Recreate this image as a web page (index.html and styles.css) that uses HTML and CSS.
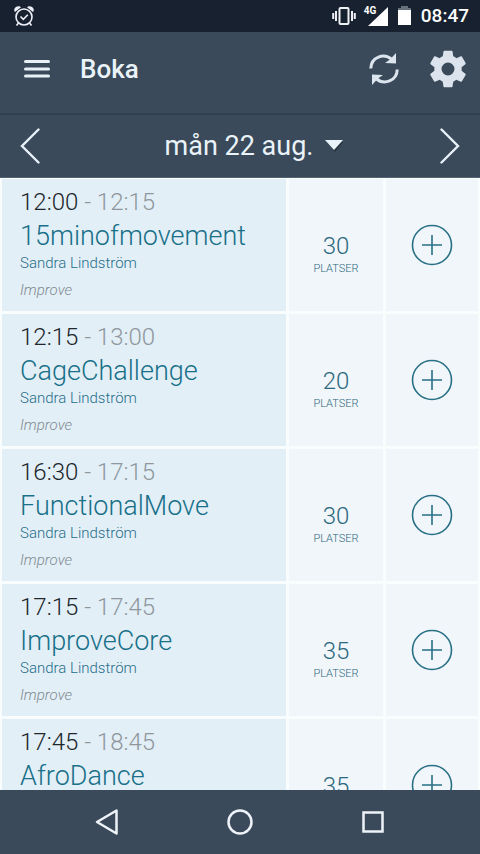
FILE: index.html
```html
<!DOCTYPE html>
<html lang="sv">
<head>
<meta charset="utf-8">
<meta name="viewport" content="width=device-width, initial-scale=1">
<title>Boka</title>
<link rel="stylesheet" href="styles.css">
</head>
<body>
<svg class="sprite" aria-hidden="true">
  <symbol id="plus" viewBox="0 0 42 42"><circle cx="21" cy="21" r="19.5"/><path d="M21 11v20M11 21h20"/></symbol>
</svg>
<div class="app">
  <div class="status">
    <svg class="alarm" width="22" height="22" viewBox="0 0 22 22" fill="none" stroke="#eef0f8" stroke-width="1.6"><circle cx="11" cy="12" r="8"/><path d="M7.500 11.500l2.800 2.800 4.500-4.600M5.500 18l-2 2.500M16.500 18l2 2.500"/><path d="M1.200 5.800Q1 1 6.500 1.200L8 2.200 2 7zM20.800 5.800Q21 1 15.500 1.200L14 2.200 20 7z" fill="#eef0f8" stroke="none"/></svg>
    <div class="status-right">
      <svg width="24" height="20" viewBox="0 0 24 20" fill="none" stroke="#eef0f4" stroke-width="2"><rect x="7.500" y="2" width="9" height="16" rx="1"/><path d="M4 5v10M20 5v10M1.200 7v6M22.800 7v6"/></svg>
      <span class="network"><span class="network-label">4G</span><svg width="20" height="19" viewBox="0 0 20 20" preserveAspectRatio="none"><path d="M20 0v20H0z" fill="#fff"/></svg></span>
      <svg width="13" height="20" viewBox="0 0 13 20"><path d="M3 0h7v2h3v3H0V2h3z" fill="#67717b"/><path d="M0 4h13v15H0z" fill="#fff"/></svg>
      <span class="clock">08:47</span>
    </div>
  </div>
  <header class="bar">
    <button class="icon-btn" aria-label="Meny"><svg width="26" height="20" viewBox="0 0 26 20" stroke="#e8f1f8" stroke-width="3" stroke-linecap="round"><path d="M1.500 2.500h23M1.500 10h23M1.500 17h23"/></svg></button>
    <h1>Boka</h1>
    <button class="icon-btn" aria-label="Uppdatera"><svg width="32" height="34" viewBox="0 0 32 34" fill="none" stroke="#dce5ee" stroke-width="3"><path d="M2.800 16.500C3 5 16 .5 24 7.500"/><path d="M29.200 17.500C29 29 16 33.500 8 26.500"/><path d="M28 1v10.500l-11-.5 5-3.500zM4 33V22.500l11 .5-5 3.500z" fill="#dce5ee" stroke="none"/></svg></button>
    <button class="icon-btn" aria-label="Inställningar"><svg width="38" height="38" viewBox="2 2 20 20"><path fill="#dce3ec" d="M19.140 12.940c.04-.3.060-.61.060-.94 0-.32-.020-.64-.070-.94l2.030-1.580c.18-.14.230-.41.120-.61l-1.920-3.320c-.12-.22-.37-.29-.59-.22l-2.390.96c-.5-.38-1.030-.7-1.620-.94l-.36-2.540c-.04-.24-.24-.41-.48-.41h-3.840c-.24 0-.43.170-.47.410l-.36 2.540c-.59.240-1.130.57-1.620.94l-2.390-.96c-.22-.08-.47 0-.59.220L2.740 8.870c-.12.210-.08.470.120.610l2.030 1.580c-.05.300-.09.630-.09.940s.020.640.070.940l-2.030 1.580c-.18.140-.23.410-.12.610l1.920 3.320c.12.220.370.290.590.220l2.390-.96c.5.380 1.030.7 1.620.94l.36 2.540c.05.240.240.410.480.410h3.840c.24 0 .44-.17.470-.41l.36-2.540c.59-.24 1.130-.56 1.620-.94l2.390.96c.22.080.47 0 .59-.22l1.920-3.320c.12-.22.070-.47-.12-.61l-2.010-1.580zM12 15.400a3.400 3.400 0 1 1 0-6.800 3.400 3.400 0 0 1 0 6.800z"/></svg></button>
  </header>
  <nav class="date-bar" aria-label="Datum">
    <button class="icon-btn" aria-label="Föregående dag"><svg width="20" height="36" viewBox="0 0 20 36" fill="none" stroke="#e8f1f8" stroke-width="2.400" stroke-linecap="round"><path d="M18.500 1.500L2 18l16.500 16.500"/></svg></button>
    <button class="date">mån 22 aug.<svg width="18" height="12" viewBox="0 0 18 12"><path d="M2 2h16l-8 10z" fill="#27343f"/><path d="M0 0h18L9 10z" fill="#e8f4fa"/></svg></button>
    <button class="icon-btn" aria-label="Nästa dag"><svg width="20" height="36" viewBox="0 0 20 36" fill="none" stroke="#e8f1f8" stroke-width="2.400" stroke-linecap="round"><path d="M1.500 1.500L18 18 1.500 34.500"/></svg></button>
  </nav>
  <main class="list">
    <article class="row">
      <div class="info"><p class="time">12:00 <span>- 12:15</span></p><h2>15minofmovement</h2><p class="coach">Sandra Lindström</p><p class="place">Improve</p></div>
      <div class="spots"><b>30</b><small>PLATSER</small></div>
      <button class="add" aria-label="Boka 15minofmovement"><svg><use href="#plus"/></svg></button>
    </article>
    <article class="row">
      <div class="info"><p class="time">12:15 <span>- 13:00</span></p><h2>CageChallenge</h2><p class="coach">Sandra Lindström</p><p class="place">Improve</p></div>
      <div class="spots"><b>20</b><small>PLATSER</small></div>
      <button class="add" aria-label="Boka CageChallenge"><svg><use href="#plus"/></svg></button>
    </article>
    <article class="row">
      <div class="info"><p class="time">16:30 <span>- 17:15</span></p><h2>FunctionalMove</h2><p class="coach">Sandra Lindström</p><p class="place">Improve</p></div>
      <div class="spots"><b>30</b><small>PLATSER</small></div>
      <button class="add" aria-label="Boka FunctionalMove"><svg><use href="#plus"/></svg></button>
    </article>
    <article class="row">
      <div class="info"><p class="time">17:15 <span>- 17:45</span></p><h2>ImproveCore</h2><p class="coach">Sandra Lindström</p><p class="place">Improve</p></div>
      <div class="spots"><b>35</b><small>PLATSER</small></div>
      <button class="add" aria-label="Boka ImproveCore"><svg><use href="#plus"/></svg></button>
    </article>
    <article class="row">
      <div class="info"><p class="time">17:45 <span>- 18:45</span></p><h2>AfroDance</h2></div>
      <div class="spots"><b>35</b></div>
      <button class="add" aria-label="Boka AfroDance"><svg><use href="#plus"/></svg></button>
    </article>
  </main>
  <nav class="system" aria-label="System">
    <button class="icon-btn" aria-label="Tillbaka"><svg width="26" height="28" viewBox="0 0 26 28"><path d="M22.500 2.500v23L3 14z" stroke-linejoin="round"/></svg></button>
    <button class="icon-btn" aria-label="Hem"><svg width="26" height="28" viewBox="0 0 26 28"><circle cx="13" cy="14" r="11.500"/></svg></button>
    <button class="icon-btn" aria-label="Översikt"><svg width="26" height="28" viewBox="0 0 26 28"><rect x="3.500" y="4.500" width="19" height="19"/></svg></button>
  </nav>
</div>
</body>
</html>
```
FILE: styles.css
```css
* { box-sizing: border-box; margin: 0; padding: 0; }
body { font-family: Roboto, "Noto Sans", sans-serif; background: #3a4a5a; }
button { border: 0; background: none; color: inherit; font: inherit; cursor: pointer; }
svg { display: block; flex: none; }
.sprite { display: none; }
.app { display: flex; flex-direction: column; height: 100vh; }

.status {
  display: flex; align-items: center; justify-content: space-between;
  flex: none; height: 32px; padding: 0 11px 0 13px;
  background: #182130; color: #fff;
}
.status-right { display: flex; align-items: center; gap: 10px; }
.network { position: relative; display: block; margin-left: 2px; }
.network-label {
  position: absolute; left: -4px; top: -2px;
  font-size: 10px; line-height: 12px; font-weight: 700;
}
.clock { font-size: 19px; line-height: 24px; font-weight: 500; }

.bar {
  display: flex; align-items: center; gap: 29px;
  flex: none; height: 83px; padding: 0 13px 8px 24px;
  background: #3a4a5a; color: #eaf3f9;
  border-bottom: 2px solid #314151;
}
.bar h1 { flex: 1; padding-left: 1px; font-size: 26px; line-height: 32px; font-weight: 500; }

.date-bar {
  display: flex; align-items: center; justify-content: space-between;
  flex: none; height: 63px; padding: 0 20px;
  background: #3a4a5a; color: #eaf3f9;
  border-bottom: 1px solid #566370;
}
.date { display: flex; align-items: center; gap: 12px; padding-left: 28px; font-size: 27px; line-height: 32px; }

.list {
  display: flex; flex-direction: column; gap: 3px;
  flex: 1; min-height: 0; overflow: hidden;
  padding: 1px 2px 0; background: #fafdfe;
}
.row { display: grid; grid-template-columns: 1fr 94px 92px; gap: 3px; flex: none; height: 132px; }
.info { padding: 8px 18px; background: #e3eff6; }
.time { font-size: 24px; line-height: 30px; font-weight: 300; color: #20262c; }
.time span { color: #8e979e; }
.info h2 { padding-top: 3px; font-size: 27px; line-height: 32px; font-weight: 300; color: #187089; }
.coach { padding-top: 1px; font-size: 15px; line-height: 20px; font-weight: 300; color: #1f6d8a; }
.place { padding-top: 7px; font-size: 15px; line-height: 20px; font-style: italic; font-weight: 300; color: #7f8a91; }
.spots {
  display: flex; flex-direction: column; align-items: center;
  padding-top: 52px; background: #f0f6f9; color: #2c687e;
}
.spots b { font-size: 24px; line-height: 30px; font-weight: 300; }
.spots small { font-size: 11px; line-height: 16px; font-weight: 300; }
.add { display: flex; align-items: center; justify-content: center; background: #f0f6f9; }
.add svg { width: 42px; height: 42px; fill: none; stroke: #287085; stroke-width: 1.600; }

.system {
  display: flex; align-items: center; justify-content: center; gap: 107px;
  flex: none; height: 64px; background: #3a4a5a;
}
.system svg { fill: none; stroke: #eef3f9; stroke-width: 2.500; }
```
